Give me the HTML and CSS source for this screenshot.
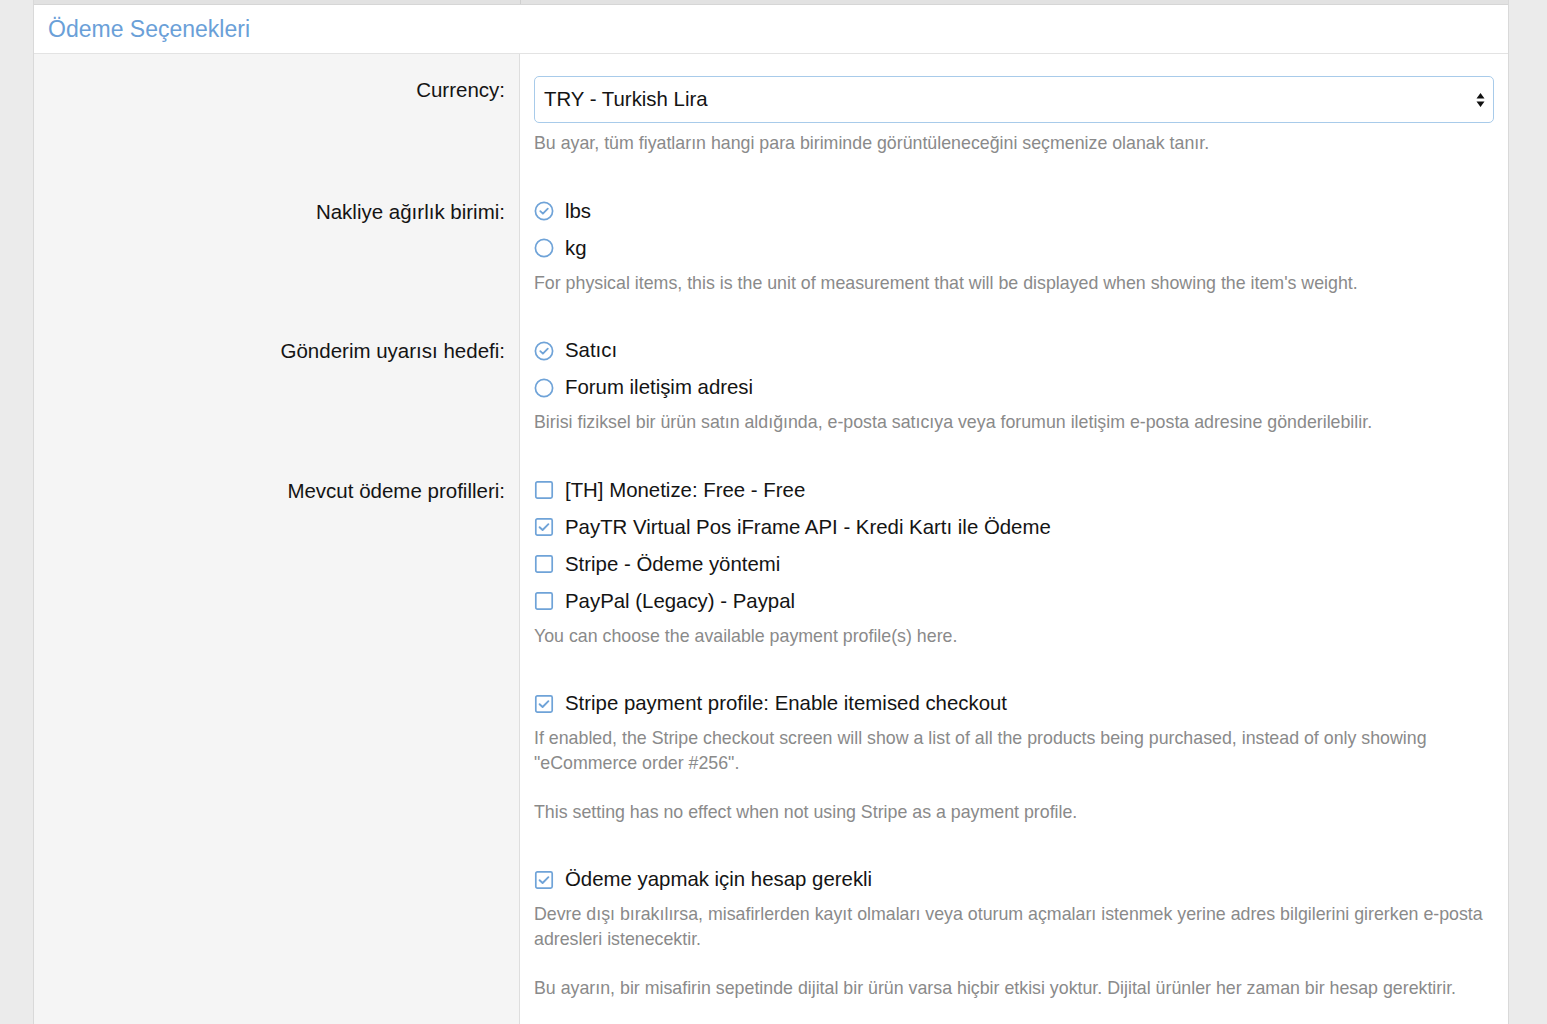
FILE: index.html
```html
<!DOCTYPE html>
<html lang="tr">
<head>
<meta charset="utf-8">
<title>Ödeme Seçenekleri</title>
<link rel="stylesheet" href="styles.css">
</head>
<body>
<div class="panel">
  <div class="prev-row"><div class="prev-label"></div><div class="prev-ctrl"></div></div>
  <h2 class="panel-title">Ödeme Seçenekleri</h2>

  <div class="form-row">
    <div class="row-label row-label--select">Currency:</div>
    <div class="row-ctrl">
      <div class="select">
        <span>TRY - Turkish Lira</span>
        <svg class="select-arrow" width="9" height="16" viewBox="0 0 9 16"><path d="M4.5 1 L8.5 6.5 L0.5 6.5 Z M4.5 15 L8.5 9.5 L0.5 9.5 Z" fill="#111"/></svg>
      </div>
      <div class="hint hint--select">Bu ayar, tüm fiyatların hangi para biriminde görüntüleneceğini seçmenize olanak tanır.</div>
    </div>
  </div>

  <div class="form-row">
    <div class="row-label">Nakliye ağırlık birimi:</div>
    <div class="row-ctrl">
      <div class="option">
        <svg class="ico" width="20" height="20" viewBox="0 0 20 20"><circle cx="10" cy="10" r="8.6" fill="none" stroke="#6fa3d8" stroke-width="1.7"/><path d="M6.3 10.2 L8.9 12.7 L13.8 7.6" fill="none" stroke="#6fa3d8" stroke-width="1.8" stroke-linecap="round" stroke-linejoin="round"/></svg>
        <span>lbs</span>
      </div>
      <div class="option">
        <svg class="ico" width="20" height="20" viewBox="0 0 20 20"><circle cx="10" cy="10" r="8.6" fill="none" stroke="#6fa3d8" stroke-width="1.7"/></svg>
        <span>kg</span>
      </div>
      <div class="hint">For physical items, this is the unit of measurement that will be displayed when showing the item's weight.</div>
    </div>
  </div>

  <div class="form-row">
    <div class="row-label">Gönderim uyarısı hedefi:</div>
    <div class="row-ctrl">
      <div class="option">
        <svg class="ico" width="20" height="20" viewBox="0 0 20 20"><circle cx="10" cy="10" r="8.6" fill="none" stroke="#6fa3d8" stroke-width="1.7"/><path d="M6.3 10.2 L8.9 12.7 L13.8 7.6" fill="none" stroke="#6fa3d8" stroke-width="1.8" stroke-linecap="round" stroke-linejoin="round"/></svg>
        <span>Satıcı</span>
      </div>
      <div class="option">
        <svg class="ico" width="20" height="20" viewBox="0 0 20 20"><circle cx="10" cy="10" r="8.6" fill="none" stroke="#6fa3d8" stroke-width="1.7"/></svg>
        <span>Forum iletişim adresi</span>
      </div>
      <div class="hint">Birisi fiziksel bir ürün satın aldığında, e-posta satıcıya veya forumun iletişim e-posta adresine gönderilebilir.</div>
    </div>
  </div>

  <div class="form-row">
    <div class="row-label">Mevcut ödeme profilleri:</div>
    <div class="row-ctrl">
      <div class="option">
        <svg class="ico" width="20" height="20" viewBox="0 0 20 20"><rect x="1.8" y="1.8" width="16.4" height="16.4" rx="1.6" fill="#fff" stroke="#6fa3d8" stroke-width="1.7"/></svg>
        <span>[TH] Monetize: Free - Free</span>
      </div>
      <div class="option">
        <svg class="ico" width="20" height="20" viewBox="0 0 20 20"><rect x="1.8" y="1.8" width="16.4" height="16.4" rx="1.6" fill="#fff" stroke="#6fa3d8" stroke-width="1.7"/><path d="M5.6 10.2 L8.6 13 L14.4 7.2" fill="none" stroke="#6fa3d8" stroke-width="1.9" stroke-linecap="round" stroke-linejoin="round"/></svg>
        <span>PayTR Virtual Pos iFrame API - Kredi Kartı ile Ödeme</span>
      </div>
      <div class="option">
        <svg class="ico" width="20" height="20" viewBox="0 0 20 20"><rect x="1.8" y="1.8" width="16.4" height="16.4" rx="1.6" fill="#fff" stroke="#6fa3d8" stroke-width="1.7"/></svg>
        <span>Stripe - Ödeme yöntemi</span>
      </div>
      <div class="option">
        <svg class="ico" width="20" height="20" viewBox="0 0 20 20"><rect x="1.8" y="1.8" width="16.4" height="16.4" rx="1.6" fill="#fff" stroke="#6fa3d8" stroke-width="1.7"/></svg>
        <span>PayPal (Legacy) - Paypal</span>
      </div>
      <div class="hint">You can choose the available payment profile(s) here.</div>
    </div>
  </div>

  <div class="form-row">
    <div class="row-label"></div>
    <div class="row-ctrl">
      <div class="option">
        <svg class="ico" width="20" height="20" viewBox="0 0 20 20"><rect x="1.8" y="1.8" width="16.4" height="16.4" rx="1.6" fill="#fff" stroke="#6fa3d8" stroke-width="1.7"/><path d="M5.6 10.2 L8.6 13 L14.4 7.2" fill="none" stroke="#6fa3d8" stroke-width="1.9" stroke-linecap="round" stroke-linejoin="round"/></svg>
        <span>Stripe payment profile: Enable itemised checkout</span>
      </div>
      <div class="hint">If enabled, the Stripe checkout screen will show a list of all the products being purchased, instead of only showing "eCommerce order #256".<br><br>This setting has no effect when not using Stripe as a payment profile.</div>
    </div>
  </div>

  <div class="form-row form-row--last">
    <div class="row-label"></div>
    <div class="row-ctrl">
      <div class="option">
        <svg class="ico" width="20" height="20" viewBox="0 0 20 20"><rect x="1.8" y="1.8" width="16.4" height="16.4" rx="1.6" fill="#fff" stroke="#6fa3d8" stroke-width="1.7"/><path d="M5.6 10.2 L8.6 13 L14.4 7.2" fill="none" stroke="#6fa3d8" stroke-width="1.9" stroke-linecap="round" stroke-linejoin="round"/></svg>
        <span>Ödeme yapmak için hesap gerekli</span>
      </div>
      <div class="hint">Devre dışı bırakılırsa, misafirlerden kayıt olmaları veya oturum açmaları istenmek yerine adres bilgilerini girerken e-posta adresleri istenecektir.<br><br>Bu ayarın, bir misafirin sepetinde dijital bir ürün varsa hiçbir etkisi yoktur. Dijital ürünler her zaman bir hesap gerektirir.</div>
    </div>
  </div>
</div>
</body>
</html>
```

FILE: styles.css
```css
html, body {
  margin: 0;
  padding: 0;
}
body {
  background: #ebebeb;
  font-family: "Liberation Sans", Arial, sans-serif;
  color: #141414;
  height: 1024px;
  overflow: hidden;
}
.panel {
  margin-left: 33px;
  width: 1476px;
  box-sizing: border-box;
  border-left: 1px solid #d9d9d9;
  border-right: 1px solid #d9d9d9;
  background: #fff;
  min-height: 1024px;
  display: flex;
  flex-direction: column;
}
.prev-row {
  display: flex;
  height: 4px;
  border-bottom: 1px solid #d6d6d6;
  background: #e2e2e2;
}
.prev-label {
  width: 486px;
  border-right: 1px solid #cfcfcf;
}
.prev-ctrl {
  flex: 1;
}
.panel-title {
  margin: 0;
  height: 49px;
  box-sizing: border-box;
  padding: 10px 14px 0;
  font-size: 23px;
  font-weight: normal;
  line-height: 28px;
  color: #6aa0d8;
  border-bottom: 1px solid #e3e3e3;
}
.form-row {
  display: flex;
}
.form-row--last {
  flex: 1;
}
.row-label {
  width: 486px;
  box-sizing: border-box;
  flex-shrink: 0;
  background: #f5f5f5;
  border-right: 1px solid #dedede;
  text-align: right;
  padding: 22px 14px 0 14px;
  font-size: 20.5px;
  line-height: 37px;
  color: #141414;
}
.row-label--select {
  padding-top: 22px;
  line-height: 28px;
}
.row-ctrl {
  flex: 1;
  padding: 22px 14px 15px 14px;
}
.select {
  height: 47px;
  box-sizing: border-box;
  border: 1px solid #a8cbea;
  border-radius: 5px;
  display: flex;
  align-items: center;
  justify-content: space-between;
  padding: 0 8px 0 9px;
  font-size: 20.4px;
  color: #141414;
  background: #fff;
}
.select-arrow {
  display: block;
}
.option {
  display: flex;
  align-items: center;
  height: 37px;
  font-size: 20.4px;
  color: #141414;
}
.ico {
  flex-shrink: 0;
  margin-left: 0;
  margin-right: 11px;
  display: block;
}
.hint {
  margin-top: 4px;
  font-size: 17.8px;
  line-height: 24.5px;
  color: #8a8a8a;
}
.hint--select {
  margin-top: 8px;
}
```
